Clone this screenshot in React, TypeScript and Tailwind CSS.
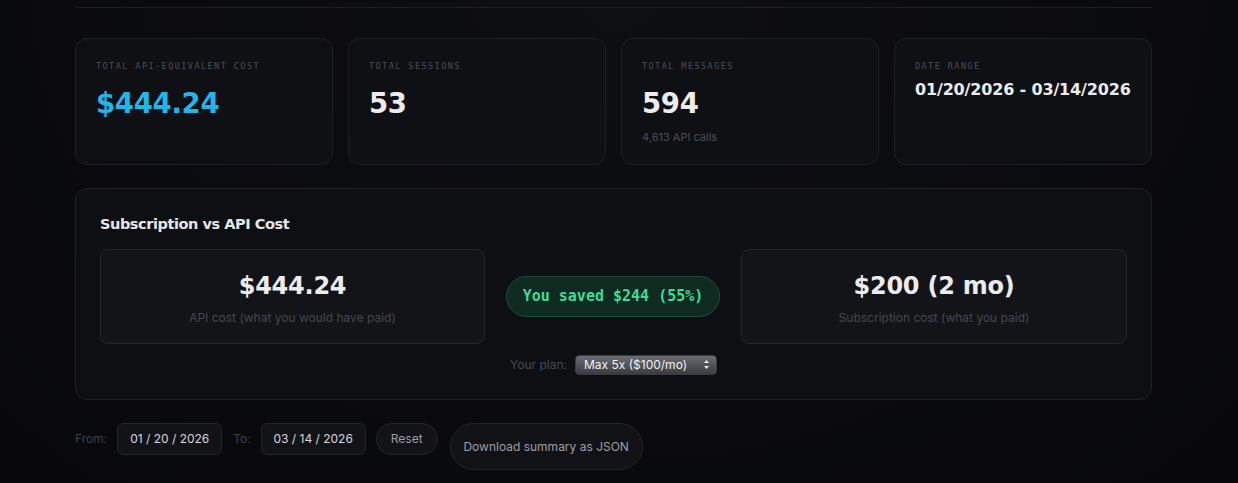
import React from 'react';

const display = "font-['DejaVu_Sans',sans-serif]";
const mono = "font-['DejaVu_Sans_Mono','Liberation_Mono',monospace]";
const body = "font-['Inter','Liberation_Sans',sans-serif]";

interface StatProps {
  label: string;
  value: string;
  sub?: string;
  accent?: boolean;
  small?: boolean;
}

function StatCard({ label, value, sub, accent, small }: StatProps) {
  return (
    <div className="h-[127px] rounded-xl border border-[#1f2026] bg-[#0f1014] px-5 pt-[21px]">
      <div className={`${mono} text-[8.5px] uppercase tracking-[0.17em] text-[#4a4d58]`}>{label}</div>
      <div
        className={`${display} font-bold tracking-[-0.01em] ${
          small ? 'mt-[5px] text-[16px]' : 'mt-[13px] text-[27.5px] leading-[34px]'
        } ${accent ? 'text-[#22b5ea]' : 'text-[#ececef]'}`}
      >
        {value}
      </div>
      {sub && <div className={`${body} mt-[9px] text-[11px] text-[#4a4d58]`}>{sub}</div>}
    </div>
  );
}

function CostBox({ value, caption }: { value: string; caption: string }) {
  return (
    <div className="flex h-[95px] flex-col items-center justify-center rounded-lg border border-[#25262c] bg-[#131418] pt-[6px]">
      <div className={`${display} text-[24px] font-bold leading-[30px] tracking-[-0.01em] text-[#ececef]`}>{value}</div>
      <div className={`${body} mt-[8px] text-[12px] text-[#44474f]`}>{caption}</div>
    </div>
  );
}

export default function App() {
  return (
    <div className="min-h-[483px] bg-[#09090b] bg-[radial-gradient(ellipse_at_top,#0e0f12,#08080a)]">
      <div className="ml-[75px] w-[1077px] pt-[7px]">
        <div className="h-px bg-[#1c1d22]" />

        <div className="mt-[30px] grid grid-cols-4 gap-[15px]">
          <StatCard label="Total API-equivalent cost" value="$444.24" accent />
          <StatCard label="Total sessions" value="53" />
          <StatCard label="Total messages" value="594" sub="4,613 API calls" />
          <StatCard label="Date range" value="01/20/2026 - 03/14/2026" small />
        </div>

        <div className="mt-[23px] h-[212px] rounded-xl border border-[#1f2026] bg-[#0e0f13] px-6 pt-[25px]">
          <div className={`${display} text-[14.5px] font-bold tracking-[-0.03em] text-[#e6e6ea]`}>Subscription vs API Cost</div>

          <div className="mt-[13px] grid grid-cols-[385px_1fr_386px] items-center">
            <CostBox value="$444.24" caption="API cost (what you would have paid)" />
            <div className="flex justify-center">
              <div
                className={`${mono} rounded-full border border-[#1f4b3a] bg-[#0f2a21] px-4 py-[8px] text-[15px] font-bold text-[#3ddc97]`}
              >
                You saved $244 (55%)
              </div>
            </div>
            <CostBox value="$200 (2 mo)" caption="Subscription cost (what you paid)" />
          </div>

          <div className={`${body} mt-[11px] flex items-center justify-center gap-[8px] text-[12px]`}>
            <span className="text-[#464952]">Your plan:</span>
            <div className="flex h-[20px] w-[142px] items-center justify-between rounded-[4px] border border-[#3a3b40] bg-gradient-to-b from-[#6a6b70] to-[#3c3d42] pl-[8px] pr-[6px] text-[#f1f1f3]">
              <span>Max 5x ($100/mo)</span>
              <svg width="7" height="11" viewBox="0 0 7 11">
                <path d="M3.5 1 L6 4 H1 Z" fill="#e5e5e7" />
                <path d="M3.5 10 L6 7 H1 Z" fill="#e5e5e7" />
              </svg>
            </div>
          </div>
        </div>

        <div className={`${body} mt-[23px] flex items-start gap-[10px] text-[12px]`}>
          <div className="flex h-[32px] items-center text-[#3d4048]">From:</div>
          <div className="flex h-[32px] w-[105px] items-center justify-center rounded-md border border-[#24252b] bg-[#121317] text-[#d5d6da]">
            01 / 20 / 2026
          </div>
          <div className="flex h-[32px] items-center pl-[1px] text-[#3d4048]">To:</div>
          <div className="flex h-[32px] w-[105px] items-center justify-center rounded-md border border-[#24252b] bg-[#121317] text-[#d5d6da]">
            03 / 14 / 2026
          </div>
          <div className="flex h-[32px] w-[62px] items-center justify-center rounded-full border border-[#24252b] bg-[#121317] text-[#9c9ea6]">
            Reset
          </div>
          <div className="ml-[2px] flex h-[47px] w-[193px] items-center justify-center rounded-full border border-[#24252b] bg-[#111216] text-[#9c9ea6]">
            Download summary as JSON
          </div>
        </div>
      </div>
    </div>
  );
}
